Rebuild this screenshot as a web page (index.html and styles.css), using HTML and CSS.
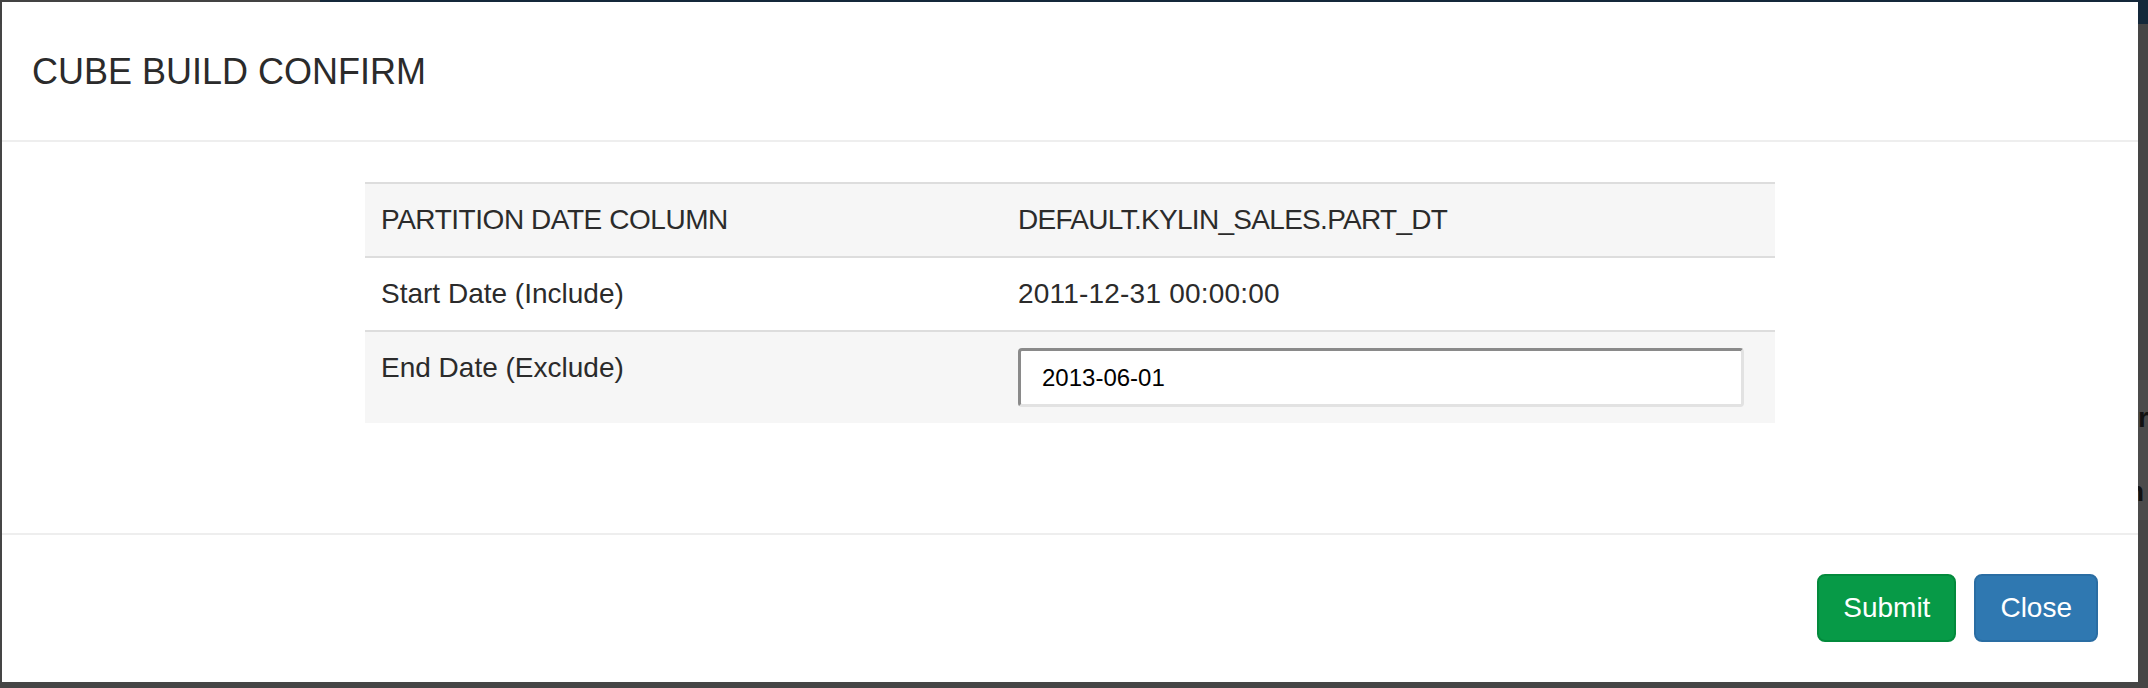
FILE: index.html
```html
<!DOCTYPE html>
<html>
<head>
<meta charset="utf-8">
<link rel="stylesheet" href="styles.css">
<title>Cube Build Confirm</title>
</head>
<body>
<div class="page">
  <div class="topbar"><div class="topbar-left"></div><div class="topbar-right"></div></div>
  <div class="page-rest">
    <div class="band">
      <div class="peek peek-1">r</div>
      <div class="peek peek-2">n</div>
    </div>
  </div>
</div>
<div class="modal">
  <div class="modal-header">
    <h4 class="modal-title">CUBE BUILD CONFIRM</h4>
  </div>
  <div class="modal-body">
    <table class="info-table">
      <colgroup><col class="col-label"><col></colgroup>
      <tbody>
        <tr class="odd">
          <td class="caps-label">PARTITION DATE COLUMN</td>
          <td class="caps-value">DEFAULT.KYLIN_SALES.PART_DT</td>
        </tr>
        <tr>
          <td>Start Date (Include)</td>
          <td class="digits">2011-12-31 00:00:00</td>
        </tr>
        <tr class="odd">
          <td>End Date (Exclude)</td>
          <td><input class="date-input" type="text" value="2013-06-01"></td>
        </tr>
      </tbody>
    </table>
  </div>
  <div class="modal-footer">
    <button class="btn btn-success">Submit</button>
    <button class="btn btn-primary">Close</button>
  </div>
</div>
</body>
</html>
```

FILE: styles.css
```css
html, body {
  margin: 0;
  padding: 0;
}
body {
  width: 2148px;
  height: 688px;
  overflow: hidden;
  background: #454545;
  font-family: "Liberation Sans", Arial, Helvetica, sans-serif;
  position: relative;
}
.page {
  display: flex;
  flex-direction: column;
  height: 688px;
}
.topbar {
  display: flex;
  height: 24px;
}
.topbar-left {
  width: 320px;
  background: #434343;
}
.topbar-right {
  flex: 1;
  background: #14283a;
}
.page-rest {
  flex: 1;
  padding-top: 356px;
}
.band {
  position: relative;
  height: 140px;
  background: #4b4b4b;
}
.peek {
  position: absolute;
  font-size: 28px;
  line-height: 40px;
  font-weight: 700;
  color: #111;
}
.peek-1 { top: 18px; left: 2138px; }
.peek-2 { top: 92px; left: 2127px; }

.modal {
  position: absolute;
  left: 2px;
  top: 2px;
  width: 2136px;
  height: 680px;
  background: #fff;
  display: flex;
  flex-direction: column;
}
.modal-header {
  padding: 44px 30px 43px;
  border-bottom: 2px solid #eeeeee;
}
.modal-title {
  margin: 0;
  font-size: 36px;
  line-height: 51px;
  font-weight: 400;
  color: #2b2b2b;
}
.modal-body {
  flex: 1;
  padding-top: 40px;
}
.info-table {
  width: 1410px;
  margin: 0 auto;
  border-collapse: collapse;
  table-layout: fixed;
}
.col-label {
  width: 637px;
}
.info-table td {
  padding: 16px;
  border-top: 2px solid #dddddd;
  font-size: 28px;
  line-height: 40px;
  color: #2b2b2b;
  vertical-align: top;
  white-space: nowrap;
}
.info-table tr.odd td {
  background: #f6f6f6;
}
.info-table td.caps-label {
  letter-spacing: -0.45px;
}
.info-table td.caps-value {
  letter-spacing: -0.7px;
}
.info-table td.digits {
  letter-spacing: 0.2px;
}
.date-input {
  display: block;
  box-sizing: border-box;
  width: 726px;
  height: 59px;
  margin: 0;
  padding: 0 0 0 21px;
  border: 3px solid #e2e2e2;
  border-top-color: #8a8a8a;
  border-left-color: #8a8a8a;
  border-radius: 4px;
  background: #fff;
  font-family: "Liberation Sans", Arial, sans-serif;
  font-size: 24px;
  color: #000;
  outline: none;
}
.modal-footer {
  display: flex;
  justify-content: flex-end;
  gap: 18px;
  padding: 39px 40px 40px;
  border-top: 2px solid #eeeeee;
}
.btn {
  font-family: "Liberation Sans", Arial, sans-serif;
  font-size: 28px;
  line-height: 40px;
  padding: 12px 24px;
  border: 2px solid transparent;
  border-radius: 8px;
  color: #fff;
  cursor: pointer;
}
.btn-success {
  background: #079a47;
  border-color: #038a3c;
}
.btn-primary {
  background: #2f78b1;
  border-color: #2a6da3;
}
```
